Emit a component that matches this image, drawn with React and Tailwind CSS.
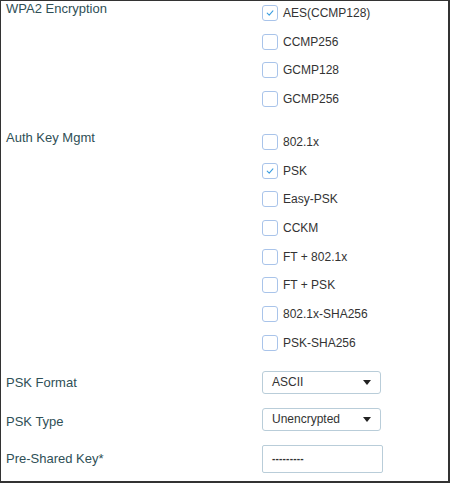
import React from "react";

const encryption = [
  { label: "AES(CCMP128)", checked: true },
  { label: "CCMP256" },
  { label: "GCMP128" },
  { label: "GCMP256" },
];

const akm = [
  { label: "802.1x" },
  { label: "PSK", checked: true },
  { label: "Easy-PSK" },
  { label: "CCKM" },
  { label: "FT + 802.1x" },
  { label: "FT + PSK" },
  { label: "802.1x-SHA256" },
  { label: "PSK-SHA256" },
];

/* small checkbox with its label */
const Check = ({ label, checked }) => (
  <div className="flex items-center h-4 gap-[5px]">
    <span className="w-4 h-4 rounded-[3px] border-[1.5px] border-[#a9c4ea] bg-white flex items-center justify-center">
      {checked && (
        <svg width="10" height="10" viewBox="0 0 10 10" fill="none">
          <path d="M2.2 5.2 L4.2 7.1 L7.9 2.8" stroke="#3d9fe0" strokeWidth="1.1" strokeLinecap="round" strokeLinejoin="round" />
        </svg>
      )}
    </span>
    <span className="text-[12px] leading-none text-[#333]">{label}</span>
  </div>
);

const Label = ({ children, className = "" }) => (
  <div className={`pl-[5px] text-[13px] leading-[15px] text-[#2f4f56] ${className}`}>{children}</div>
);

const Select = ({ value, h = "h-[23px]" }) => (
  <div className={`w-[119px] ${h} rounded-[3px] border border-[#b9cdd9] flex items-center justify-between pl-[9px] pr-[9px]`}>
    <span className="text-[12px] leading-none text-[#333]">{value}</span>
    <svg width="8" height="5" viewBox="0 0 8 5">
      <path d="M0 0 H8 L4 5 Z" fill="#222" />
    </svg>
  </div>
);

export default function App() {
  return (
    <div
      className="w-[450px] h-[483px] bg-white border-t border-l border-r-2 border-b-2 border-[#333] overflow-hidden"
      style={{ fontFamily: '"Liberation Sans", Arial, sans-serif' }}
    >
      <div className="grid grid-cols-[261px_1fr] pt-[4px]">
        <Label className="-mt-[4px]">WPA2 Encryption</Label>
        <div className="flex flex-col gap-[12.5px]">
          {encryption.map((o) => (
            <Check key={o.label} {...o} />
          ))}
        </div>
      </div>

      <div className="grid grid-cols-[261px_1fr] mt-[27.5px]">
        <Label className="-mt-[4px]">Auth Key Mgmt</Label>
        <div className="flex flex-col gap-[12.67px]">
          {akm.map((o) => (
            <Check key={o.label} {...o} />
          ))}
        </div>
      </div>

      <div className="grid grid-cols-[261px_1fr] items-center mt-[20px]">
        <Label>PSK Format</Label>
        <Select value="ASCII" />
      </div>

      <div className="grid grid-cols-[261px_1fr] items-center mt-[14px]">
        <Label className="mt-[4px]">PSK Type</Label>
        <Select value="Unencrypted" />
      </div>

      <div className="grid grid-cols-[261px_1fr] items-center mt-[14px]">
        <Label>Pre-Shared Key*</Label>
        <div className="w-[121px] h-[28px] rounded-[2px] border border-[#b9cdd9] flex items-center pl-[9px]">
          <span className="text-[10px] leading-none text-[#333] font-bold tracking-[0.2px]">---------</span>
        </div>
      </div>
    </div>
  );
}
